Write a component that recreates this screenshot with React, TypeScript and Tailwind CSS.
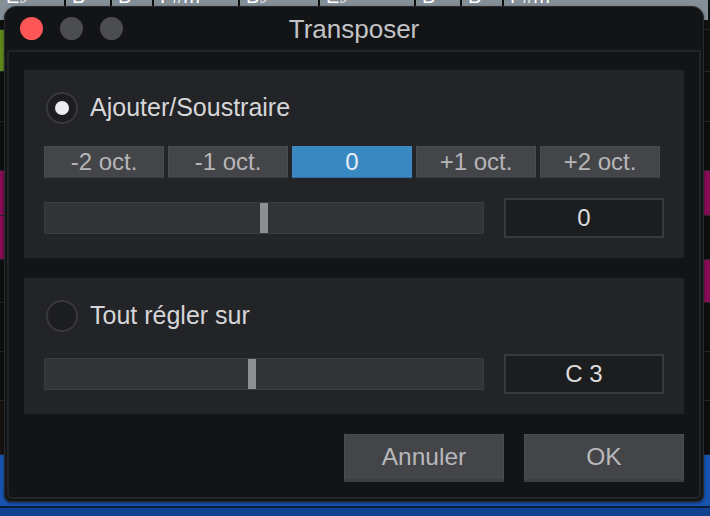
import { useState } from 'react';

const font = { fontFamily: '"Liberation Sans", Arial, sans-serif' };

const chords = [
    { w: 66, label: 'E♭' },
    { w: 46, label: 'B' },
    { w: 42, label: 'B' },
    { w: 86, label: 'F#m' },
    { w: 80, label: 'B♭' },
    { w: 96, label: 'E♭' },
    { w: 46, label: 'B' },
    { w: 42, label: 'B' },
    { w: 206, label: 'F#m' },
];

// rangées de pistes visibles derrière la fenêtre (gauche / droite)
const tracks = [
    { h: 10, left: 'bg-[#0f1110]', right: 'bg-[#0f1110]' },
    { h: 42, left: 'bg-[#5e8a1c]', right: 'bg-[#0f1110]' },
    { h: 50, left: 'bg-[#0d0f0e]', right: 'bg-[#0d0f0e]' },
    { h: 49, left: 'bg-[#0d0f0e]', right: 'bg-[#0d0f0e]' },
    { h: 45, left: 'bg-[#860d55]', right: 'bg-[#860d55]' },
    { h: 44, left: 'bg-[#860d55]', right: 'bg-[#0d0f0e]' },
    { h: 43, left: 'bg-[#0d0f0e]', right: 'bg-[#860d55]' },
    { h: 49, left: 'bg-[#0d0f0e]', right: 'bg-[#0d0f0e]' },
    { h: 49, left: 'bg-[#0d0f0e]', right: 'bg-[#0d0f0e]' },
    { h: 54, left: 'bg-[#15120f]', right: 'bg-[#0d0f0e]' },
];

const octaves = ['-2 oct.', '-1 oct.', '0', '+1 oct.', '+2 oct.'];

function Radio({ checked, onClick }: { checked: boolean; onClick: () => void }) {
    return (
        <button
            onClick={onClick}
            className="ml-[2px] w-[32px] h-[32px] rounded-full border-2 border-[#37383b] bg-[#1c1d1f] flex items-center justify-center"
        >
            {checked && <span className="w-[14px] h-[14px] rounded-full bg-[#ececee]" />}
        </button>
    );
}

function Slider({ pos }: { pos: number }) {
    return (
        <div className="relative w-[440px] h-[32px] bg-[#313335] border border-[#3a3c3f]">
            <div className="absolute top-0 bottom-0 w-[8px] bg-[#8e8f91]" style={{ left: pos }} />
        </div>
    );
}

function ValueBox({ value }: { value: string }) {
    return (
        <div className="w-[160px] h-[40px] bg-[#1c1d1f] border-2 border-[#393a3d] flex items-center justify-center text-[24px] text-[#dcdcde]">
            {value}
        </div>
    );
}

export default function App() {
    const [mode, setMode] = useState<'add' | 'set'>('add');
    const [octave, setOctave] = useState('0');

    return (
        <div className="relative w-[710px] h-[516px] overflow-hidden bg-[#0d0f0e]" style={font}>
            {/* arrière-plan : piste d'accords + pistes */}
            <div className="flex flex-col">
                <div className="flex h-[20px] bg-[#848f97] overflow-hidden shrink-0">
                    {chords.map((c, i) => (
                        <div
                            key={i}
                            className="shrink-0 border-r-2 border-[#0f1110] text-white text-[20px] leading-[20px] pl-[6px] -mt-[14px]"
                            style={{ width: c.w }}
                        >
                            {c.label}
                        </div>
                    ))}
                </div>
                {tracks.map((t, i) => (
                    <div key={i} className="flex shrink-0 border-b border-[#24262a]" style={{ height: t.h }}>
                        <div className={`w-[40px] ${t.left}`} />
                        <div className="flex-1 bg-[#0d0f0e]" />
                        <div className={`w-[40px] ${t.right}`} />
                    </div>
                ))}
                <div className="h-[61px] shrink-0 flex flex-col">
                    <div className="flex-1 bg-[#1754b0]" />
                    <div className="h-[2px] bg-[#0a1d3a]" />
                    <div className="h-[8px] bg-[#0f4290]" />
                </div>
            </div>

            {/* fenêtre Transposer */}
            <div className="absolute top-[6px] left-[4px] w-[700px] h-[496px] flex flex-col bg-[#131416] rounded-t-[12px] rounded-b-[7px] border border-[#2a2b2e] shadow-[0_1px_3px_rgba(0,0,0,0.5)]">
                <div className="h-[43px] shrink-0 relative flex items-center justify-center">
                    <div className="absolute left-[15px] top-[10px] flex gap-[17px]">
                        <span className="w-[23px] h-[23px] rounded-full bg-[#fd5656]" />
                        <span className="w-[23px] h-[23px] rounded-full bg-[#4c4d4f]" />
                        <span className="w-[23px] h-[23px] rounded-full bg-[#4c4d4f]" />
                    </div>
                    <span className="text-[26px] text-[#c4c4c6] mt-[1px]">Transposer</span>
                </div>

                <div className="flex-1 flex flex-col mx-[2px] mb-[2px] border-2 border-[#232427] rounded-b-[5px] px-[15px] pt-[18px] pb-[15px] gap-[20px]">
                    {/* Ajouter/Soustraire */}
                    <div className="bg-[#232427] h-[188px] shrink-0 px-[20px] pt-[22px]">
                        <div className="flex items-center gap-[12px] h-[32px]">
                            <Radio checked={mode === 'add'} onClick={() => setMode('add')} />
                            <span className="text-[25px] text-[#d6d6d8]">Ajouter/Soustraire</span>
                        </div>
                        <div className="flex gap-[4px] mt-[22px]">
                            {octaves.map((o) => (
                                <button
                                    key={o}
                                    onClick={() => setOctave(o)}
                                    className={
                                        octave === o
                                            ? 'w-[120px] h-[32px] bg-[#3a88c2] border border-[#3f8cc5] border-b-[#2e6d9e] text-[24px] text-[#e8eef6] leading-none'
                                            : 'w-[120px] h-[32px] bg-[#444548] border border-[#4b4c4f] border-b-[#3a3b3e] text-[24px] text-[#b6b6b8] leading-none'
                                    }
                                >
                                    {o}
                                </button>
                            ))}
                        </div>
                        <div className="flex items-center gap-[20px] mt-[20px] h-[40px]">
                            <Slider pos={215} />
                            <ValueBox value="0" />
                        </div>
                    </div>

                    {/* Tout régler sur */}
                    <div className="bg-[#232427] h-[136px] shrink-0 px-[20px] pt-[22px]">
                        <div className="flex items-center gap-[12px] h-[32px]">
                            <Radio checked={mode === 'set'} onClick={() => setMode('set')} />
                            <span className="text-[25px] text-[#d6d6d8]">Tout régler sur</span>
                        </div>
                        <div className="flex items-center gap-[20px] mt-[22px] h-[40px]">
                            <Slider pos={203} />
                            <ValueBox value="C 3" />
                        </div>
                    </div>

                    <div className="flex justify-end gap-[20px] shrink-0">
                        <button className="w-[160px] h-[48px] bg-[#444548] border border-[#4b4c4f] border-b-[3px] border-b-[#3c3d40] text-[24.5px] text-[#b8b8ba]">
                            Annuler
                        </button>
                        <button className="w-[160px] h-[48px] bg-[#444548] border border-[#4b4c4f] border-b-[3px] border-b-[#3c3d40] text-[24.5px] text-[#b8b8ba]">
                            OK
                        </button>
                    </div>
                </div>
            </div>
        </div>
    );
}
